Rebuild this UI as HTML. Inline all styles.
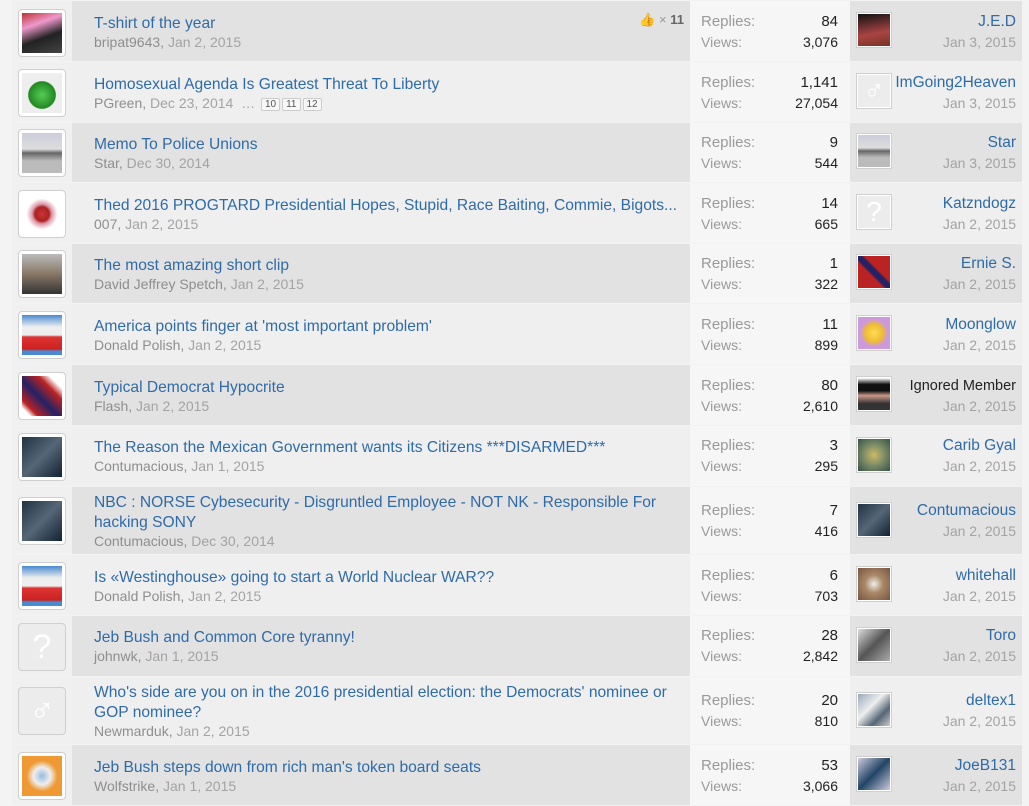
<!DOCTYPE html>
<html><head><meta charset="utf-8"><style>
*{margin:0;padding:0;box-sizing:border-box}
body{width:1029px;height:782px;overflow:hidden;background:#f3f3f3;font-family:"Liberation Sans",Helvetica,Arial,sans-serif;position:relative}
.row{position:absolute;left:12px;width:1010px;}
.av{position:absolute;left:0;top:0;bottom:1px;width:60px;background:#f0f0f0}
.main{position:absolute;left:60px;top:0;bottom:1px;width:618px}
.stats{position:absolute;left:678px;top:0;bottom:1px;width:160px;background:#f6f6f6}
.last{position:absolute;left:838px;top:0;bottom:1px;width:172px}
.dark .main,.dark .last{background:#e2e2e2}
.light .main,.light .last{background:#efefef}
.abox{position:absolute;left:6px;width:48px;height:48px;border:1px solid #cfcfcf;border-radius:4px;background:#fff;padding:3px}
.abox div{width:100%;height:100%}
.title{position:absolute;left:22px;font-size:15.6px;color:#2f6ba8;white-space:nowrap;line-height:20px;margin-top:2px}
.meta{position:absolute;left:22px;font-size:14px;color:#a3a3a3;white-space:nowrap;line-height:18px;margin-top:1px}
.meta b{font-weight:normal;color:#8e8e8e}
.sl{position:absolute;left:11px;font-size:15px;color:#9a9a9a;line-height:18px;margin-top:2px}
.sv{position:absolute;right:12px;font-size:15px;color:#222;line-height:18px;text-align:right;margin-top:2px}
.sm{font-size:14px;margin-top:1px}
.la{position:absolute;left:6px;width:36px;height:36px;border:1px solid #cfcfcf;background:#fff;padding:1px}
.la div{width:100%;height:100%}
.ln{position:absolute;right:6px;font-size:15.5px;color:#2f6ba8;line-height:20px;white-space:nowrap;margin-top:1px}
.ld{position:absolute;right:6px;font-size:14px;color:#a3a3a3;line-height:18px;margin-top:1px}
.pg{display:inline-block;border:1px solid #ccc;border-radius:2px;font-size:10px;color:#555;padding:0 3px;line-height:11px;margin-left:2px;vertical-align:1px;background:#f7f7f7}
.ghost{background:#ececec!important;color:#fff;font-size:34px;text-align:center;line-height:40px}
</style></head><body>

<div class="row dark" style="top:1px;height:61px">
<div class="av"><div class="abox" style="top:8px"><div style="background:linear-gradient(160deg,#b33 0%,#e9c 30%,#222 60%,#444)"></div></div></div>
<div class="main"><div class="title" style="top:11px">T-shirt of the year</div><div class="meta" style="top:31px"><b>bripat9643,</b> Jan 2, 2015</div>
<div style="position:absolute;right:6px;top:11px;font-size:13px;color:#999">👍 × <b style="color:#666">11</b></div></div>
<div class="stats"><div class="sl" style="top:10px">Replies:</div><div class="sv" style="top:10px">84</div><div class="sl sm" style="top:31px">Views:</div><div class="sv sm" style="top:31px">3,076</div></div>
<div class="last"><div class="la" style="top:11px"><div style="background:linear-gradient(170deg,#111,#a44 60%,#732)"></div></div><div class="ln" style="top:10px">J.E.D</div><div class="ld" style="top:31px">Jan 3, 2015</div></div>
</div>

<div class="row light" style="top:62px;height:61px">
<div class="av"><div class="abox" style="top:7px"><div style="background:radial-gradient(circle at 50% 55%,#5c5 0,#282 45%,#eee 48%)"></div></div></div>
<div class="main"><div class="title" style="top:11px">Homosexual Agenda Is Greatest Threat To Liberty</div><div class="meta" style="top:31px"><b>PGreen,</b> Dec 23, 2014 &nbsp;… <span class="pg">10</span><span class="pg">11</span><span class="pg">12</span></div></div>
<div class="stats"><div class="sl" style="top:10px">Replies:</div><div class="sv" style="top:10px">1,141</div><div class="sl sm" style="top:31px">Views:</div><div class="sv sm" style="top:31px">27,054</div></div>
<div class="last"><div class="la" style="top:11px"><div class="ghost" style="font-size:28px;line-height:32px">♂</div></div><div class="ln" style="top:10px">ImGoing2Heaven</div><div class="ld" style="top:31px">Jan 3, 2015</div></div>
</div>

<div class="row dark" style="top:123px;height:60px">
<div class="av"><div class="abox" style="top:6px"><div style="background:linear-gradient(180deg,#ccd 0,#ddd 40%,#666 50%,#bbb 70%)"></div></div></div>
<div class="main"><div class="title" style="top:10px">Memo To Police Unions</div><div class="meta" style="top:30px"><b>Star,</b> Dec 30, 2014</div></div>
<div class="stats"><div class="sl" style="top:9px">Replies:</div><div class="sv" style="top:9px">9</div><div class="sl sm" style="top:30px">Views:</div><div class="sv sm" style="top:30px">544</div></div>
<div class="last"><div class="la" style="top:10px"><div style="background:linear-gradient(180deg,#ccd 0,#ddd 40%,#666 50%,#bbb 70%)"></div></div><div class="ln" style="top:9px">Star</div><div class="ld" style="top:30px">Jan 3, 2015</div></div>
</div>

<div class="row light" style="top:183px;height:61px">
<div class="av"><div class="abox" style="top:7px"><div style="background:radial-gradient(circle,#c33 0,#a22 25%,#d9a 35%,#fff 55%)"></div></div></div>
<div class="main"><div class="title" style="top:11px">Thed 2016 PROGTARD Presidential Hopes, Stupid, Race Baiting, Commie, Bigots...</div><div class="meta" style="top:31px"><b>007,</b> Jan 2, 2015</div></div>
<div class="stats"><div class="sl" style="top:10px">Replies:</div><div class="sv" style="top:10px">14</div><div class="sl sm" style="top:31px">Views:</div><div class="sv sm" style="top:31px">665</div></div>
<div class="last"><div class="la" style="top:11px"><div class="ghost" style="font-size:28px;line-height:32px">?</div></div><div class="ln" style="top:10px">Katzndogz</div><div class="ld" style="top:31px">Jan 2, 2015</div></div>
</div>

<div class="row dark" style="top:244px;height:60px">
<div class="av"><div class="abox" style="top:6px"><div style="background:linear-gradient(180deg,#bbb,#876 50%,#333)"></div></div></div>
<div class="main"><div class="title" style="top:10px">The most amazing short clip</div><div class="meta" style="top:30px"><b>David Jeffrey Spetch,</b> Jan 2, 2015</div></div>
<div class="stats"><div class="sl" style="top:9px">Replies:</div><div class="sv" style="top:9px">1</div><div class="sl sm" style="top:30px">Views:</div><div class="sv sm" style="top:30px">322</div></div>
<div class="last"><div class="la" style="top:10px"><div style="background:linear-gradient(45deg,#b22 40%,#226 45%,#226 55%,#b22 60%)"></div></div><div class="ln" style="top:9px">Ernie S.</div><div class="ld" style="top:30px">Jan 2, 2015</div></div>
</div>

<div class="row light" style="top:304px;height:61px">
<div class="av"><div class="abox" style="top:7px"><div style="background:linear-gradient(180deg,#4a8ad0 0,#eee 30%,#eee 50%,#d33 55%,#c22 85%,#4a8ad0 90%)"></div></div></div>
<div class="main"><div class="title" style="top:11px">America points finger at 'most important problem'</div><div class="meta" style="top:31px"><b>Donald Polish,</b> Jan 2, 2015</div></div>
<div class="stats"><div class="sl" style="top:10px">Replies:</div><div class="sv" style="top:10px">11</div><div class="sl sm" style="top:31px">Views:</div><div class="sv sm" style="top:31px">899</div></div>
<div class="last"><div class="la" style="top:11px"><div style="background:radial-gradient(circle,#fd5 0,#eb3 40%,#c9d 60%)"></div></div><div class="ln" style="top:10px">Moonglow</div><div class="ld" style="top:31px">Jan 2, 2015</div></div>
</div>

<div class="row dark" style="top:365px;height:61px">
<div class="av"><div class="abox" style="top:7px"><div style="background:linear-gradient(45deg,#fff 10%,#b22 20%,#226 45%,#b22 70%,#fff 85%)"></div></div></div>
<div class="main"><div class="title" style="top:11px">Typical Democrat Hypocrite</div><div class="meta" style="top:31px"><b>Flash,</b> Jan 2, 2015</div></div>
<div class="stats"><div class="sl" style="top:10px">Replies:</div><div class="sv" style="top:10px">80</div><div class="sl sm" style="top:31px">Views:</div><div class="sv sm" style="top:31px">2,610</div></div>
<div class="last"><div class="la" style="top:11px"><div style="background:linear-gradient(180deg,#fff 0,#111 20%,#111 40%,#c98 55%,#333 80%)"></div></div><div class="ln" style="top:10px;color:#222;font-size:14.5px">Ignored Member</div><div class="ld" style="top:31px">Jan 2, 2015</div></div>
</div>

<div class="row light" style="top:426px;height:61px">
<div class="av"><div class="abox" style="top:7px"><div style="background:linear-gradient(135deg,#234,#567 50%,#123)"></div></div></div>
<div class="main"><div class="title" style="top:10px">The Reason the Mexican Government wants its Citizens ***DISARMED***</div><div class="meta" style="top:30px"><b>Contumacious,</b> Jan 1, 2015</div></div>
<div class="stats"><div class="sl" style="top:9px">Replies:</div><div class="sv" style="top:9px">3</div><div class="sl sm" style="top:30px">Views:</div><div class="sv sm" style="top:30px">295</div></div>
<div class="last"><div class="la" style="top:11px"><div style="background:radial-gradient(circle,#cb6 0,#786 50%,#354)"></div></div><div class="ln" style="top:9px">Carib Gyal</div><div class="ld" style="top:30px">Jan 2, 2015</div></div>
</div>

<div class="row dark" style="top:487px;height:68px">
<div class="av"><div class="abox" style="top:10px"><div style="background:linear-gradient(135deg,#234,#567 50%,#123)"></div></div></div>
<div class="main"><div class="title" style="top:4px">NBC : NORSE Cybesecurity - Disgruntled Employee - NOT NK - Responsible For<br>hacking SONY</div><div class="meta" style="top:44px"><b>Contumacious,</b> Dec 30, 2014</div></div>
<div class="stats"><div class="sl" style="top:13px">Replies:</div><div class="sv" style="top:13px">7</div><div class="sl sm" style="top:34px">Views:</div><div class="sv sm" style="top:34px">416</div></div>
<div class="last"><div class="la" style="top:15px"><div style="background:linear-gradient(135deg,#234,#567 50%,#123)"></div></div><div class="ln" style="top:13px">Contumacious</div><div class="ld" style="top:34px">Jan 2, 2015</div></div>
</div>

<div class="row light" style="top:555px;height:61px">
<div class="av"><div class="abox" style="top:7px"><div style="background:linear-gradient(180deg,#4a8ad0 0,#eee 30%,#eee 50%,#d33 55%,#c22 85%,#4a8ad0 90%)"></div></div></div>
<div class="main"><div class="title" style="top:11px">Is «Westinghouse» going to start a World Nuclear WAR??</div><div class="meta" style="top:31px"><b>Donald Polish,</b> Jan 2, 2015</div></div>
<div class="stats"><div class="sl" style="top:10px">Replies:</div><div class="sv" style="top:10px">6</div><div class="sl sm" style="top:31px">Views:</div><div class="sv sm" style="top:31px">703</div></div>
<div class="last"><div class="la" style="top:11px"><div style="background:radial-gradient(circle,#eee 0,#a86 40%,#754)"></div></div><div class="ln" style="top:10px">whitehall</div><div class="ld" style="top:31px">Jan 2, 2015</div></div>
</div>

<div class="row dark" style="top:616px;height:61px">
<div class="av"><div class="abox" style="top:7px;background:#ececec"><div class="ghost">?</div></div></div>
<div class="main"><div class="title" style="top:10px">Jeb Bush and Common Core tyranny!</div><div class="meta" style="top:30px"><b>johnwk,</b> Jan 1, 2015</div></div>
<div class="stats"><div class="sl" style="top:9px">Replies:</div><div class="sv" style="top:9px">28</div><div class="sl sm" style="top:30px">Views:</div><div class="sv sm" style="top:30px">2,842</div></div>
<div class="last"><div class="la" style="top:11px"><div style="background:linear-gradient(135deg,#ddd,#555 50%,#aaa)"></div></div><div class="ln" style="top:9px">Toro</div><div class="ld" style="top:30px">Jan 2, 2015</div></div>
</div>

<div class="row light" style="top:677px;height:68px">
<div class="av"><div class="abox" style="top:10px;background:#ececec"><div class="ghost">♂</div></div></div>
<div class="main"><div class="title" style="top:4px">Who's side are you on in the 2016 presidential election: the Democrats' nominee or<br>GOP nominee?</div><div class="meta" style="top:44px"><b>Newmarduk,</b> Jan 2, 2015</div></div>
<div class="stats"><div class="sl" style="top:13px">Replies:</div><div class="sv" style="top:13px">20</div><div class="sl sm" style="top:34px">Views:</div><div class="sv sm" style="top:34px">810</div></div>
<div class="last"><div class="la" style="top:15px"><div style="background:linear-gradient(135deg,#9ab,#eee 40%,#567 70%,#ccc)"></div></div><div class="ln" style="top:13px">deltex1</div><div class="ld" style="top:34px">Jan 2, 2015</div></div>
</div>

<div class="row dark" style="top:745px;height:61px">
<div class="av"><div class="abox" style="top:7px"><div style="background:radial-gradient(circle,#9bd 0,#eee 30%,#e93 55%)"></div></div></div>
<div class="main"><div class="title" style="top:11px">Jeb Bush steps down from rich man's token board seats</div><div class="meta" style="top:31px"><b>Wolfstrike,</b> Jan 1, 2015</div></div>
<div class="stats"><div class="sl" style="top:10px">Replies:</div><div class="sv" style="top:10px">53</div><div class="sl sm" style="top:31px">Views:</div><div class="sv sm" style="top:31px">3,066</div></div>
<div class="last"><div class="la" style="top:11px"><div style="background:linear-gradient(135deg,#ccd,#246 50%,#ccd)"></div></div><div class="ln" style="top:10px">JoeB131</div><div class="ld" style="top:31px">Jan 2, 2015</div></div>
</div>

</body></html>
